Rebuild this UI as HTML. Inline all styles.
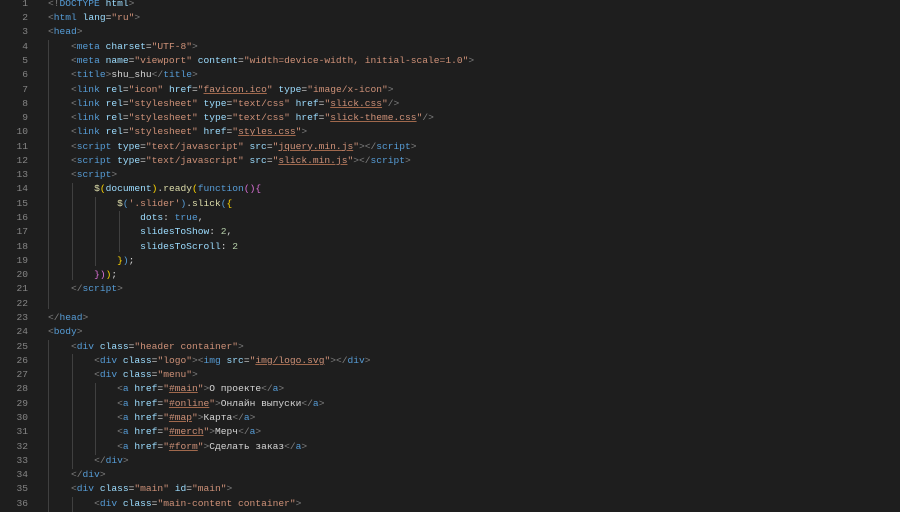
<!DOCTYPE html>
<html><head><meta charset="utf-8">
<style>
html,body{margin:0;padding:0;background:#1e1e1e;width:900px;height:512px;overflow:hidden}
#w{position:absolute;top:-3.2px;left:0;width:900px;font-family:"Liberation Mono","Noto Sans CJK SC",monospace;font-size:9.6px;line-height:14.29px;color:#d4d4d4}
.l{height:14.29px;position:relative;white-space:nowrap}
.n{position:absolute;left:0;width:28px;text-align:right;color:#858585}
.c{position:absolute;left:48px;white-space:pre}
.b{color:#808080}.t{color:#569cd6}.a{color:#9cdcfe}.s{color:#ce9178}.f{color:#dcdcaa}.y{color:#ffd700}.p{color:#da70d6}.k{color:#569cd6}.m{color:#b5cea8}
.u{text-decoration:underline;text-decoration-color:#a0684c}
.g{position:absolute;width:1px;background:#404040}
</style></head><body>
<div id="w">
<div class="l"><span class="n">1</span><span class="c"><span class="b">&lt;!</span><span class="t">DOCTYPE</span> <span class="a">html</span><span class="b">&gt;</span></span></div>
<div class="l"><span class="n">2</span><span class="c"><span class="b">&lt;</span><span class="t">html</span> <span class="a">lang</span>=<span class="s">"ru"</span><span class="b">&gt;</span></span></div>
<div class="l"><span class="n">3</span><span class="c"><span class="b">&lt;</span><span class="t">head</span><span class="b">&gt;</span></span></div>
<div class="l"><span class="n">4</span><span class="c">    <span class="b">&lt;</span><span class="t">meta</span> <span class="a">charset</span>=<span class="s">"UTF-8"</span><span class="b">&gt;</span></span></div>
<div class="l"><span class="n">5</span><span class="c">    <span class="b">&lt;</span><span class="t">meta</span> <span class="a">name</span>=<span class="s">"viewport"</span> <span class="a">content</span>=<span class="s">"width=device-width, initial-scale=1.0"</span><span class="b">&gt;</span></span></div>
<div class="l"><span class="n">6</span><span class="c">    <span class="b">&lt;</span><span class="t">title</span><span class="b">&gt;</span>shu_shu<span class="b">&lt;/</span><span class="t">title</span><span class="b">&gt;</span></span></div>
<div class="l"><span class="n">7</span><span class="c">    <span class="b">&lt;</span><span class="t">link</span> <span class="a">rel</span>=<span class="s">"icon"</span> <span class="a">href</span>=<span class="s">"<span class="u">favicon.ico</span>"</span> <span class="a">type</span>=<span class="s">"image/x-icon"</span><span class="b">&gt;</span></span></div>
<div class="l"><span class="n">8</span><span class="c">    <span class="b">&lt;</span><span class="t">link</span> <span class="a">rel</span>=<span class="s">"stylesheet"</span> <span class="a">type</span>=<span class="s">"text/css"</span> <span class="a">href</span>=<span class="s">"<span class="u">slick.css</span>"</span><span class="b">/&gt;</span></span></div>
<div class="l"><span class="n">9</span><span class="c">    <span class="b">&lt;</span><span class="t">link</span> <span class="a">rel</span>=<span class="s">"stylesheet"</span> <span class="a">type</span>=<span class="s">"text/css"</span> <span class="a">href</span>=<span class="s">"<span class="u">slick-theme.css</span>"</span><span class="b">/&gt;</span></span></div>
<div class="l"><span class="n">10</span><span class="c">    <span class="b">&lt;</span><span class="t">link</span> <span class="a">rel</span>=<span class="s">"stylesheet"</span> <span class="a">href</span>=<span class="s">"<span class="u">styles.css</span>"</span><span class="b">&gt;</span></span></div>
<div class="l"><span class="n">11</span><span class="c">    <span class="b">&lt;</span><span class="t">script</span> <span class="a">type</span>=<span class="s">"text/javascript"</span> <span class="a">src</span>=<span class="s">"<span class="u">jquery.min.js</span>"</span><span class="b">&gt;&lt;/</span><span class="t">script</span><span class="b">&gt;</span></span></div>
<div class="l"><span class="n">12</span><span class="c">    <span class="b">&lt;</span><span class="t">script</span> <span class="a">type</span>=<span class="s">"text/javascript"</span> <span class="a">src</span>=<span class="s">"<span class="u">slick.min.js</span>"</span><span class="b">&gt;&lt;/</span><span class="t">script</span><span class="b">&gt;</span></span></div>
<div class="l"><span class="n">13</span><span class="c">    <span class="b">&lt;</span><span class="t">script</span><span class="b">&gt;</span></span></div>
<div class="l"><span class="n">14</span><span class="c">        <span class="f">$</span><span class="y">(</span><span class="a">document</span><span class="y">)</span>.<span class="f">ready</span><span class="y">(</span><span class="k">function</span><span class="p">(){</span></span></div>
<div class="l"><span class="n">15</span><span class="c">            <span class="f">$</span><span class="k">(</span><span class="s">'.slider'</span><span class="k">)</span>.<span class="f">slick</span><span class="k">(</span><span class="y">{</span></span></div>
<div class="l"><span class="n">16</span><span class="c">                <span class="a">dots</span>: <span class="k">true</span>,</span></div>
<div class="l"><span class="n">17</span><span class="c">                <span class="a">slidesToShow</span>: <span class="m">2</span>,</span></div>
<div class="l"><span class="n">18</span><span class="c">                <span class="a">slidesToScroll</span>: <span class="m">2</span></span></div>
<div class="l"><span class="n">19</span><span class="c">            <span class="y">}</span><span class="k">)</span>;</span></div>
<div class="l"><span class="n">20</span><span class="c">        <span class="p">})</span><span class="y">)</span>;</span></div>
<div class="l"><span class="n">21</span><span class="c">    <span class="b">&lt;/</span><span class="t">script</span><span class="b">&gt;</span></span></div>
<div class="l"><span class="n">22</span><span class="c"></span></div>
<div class="l"><span class="n">23</span><span class="c"><span class="b">&lt;/</span><span class="t">head</span><span class="b">&gt;</span></span></div>
<div class="l"><span class="n">24</span><span class="c"><span class="b">&lt;</span><span class="t">body</span><span class="b">&gt;</span></span></div>
<div class="l"><span class="n">25</span><span class="c">    <span class="b">&lt;</span><span class="t">div</span> <span class="a">class</span>=<span class="s">"header container"</span><span class="b">&gt;</span></span></div>
<div class="l"><span class="n">26</span><span class="c">        <span class="b">&lt;</span><span class="t">div</span> <span class="a">class</span>=<span class="s">"logo"</span><span class="b">&gt;&lt;</span><span class="t">img</span> <span class="a">src</span>=<span class="s">"<span class="u">img/logo.svg</span>"</span><span class="b">&gt;&lt;/</span><span class="t">div</span><span class="b">&gt;</span></span></div>
<div class="l"><span class="n">27</span><span class="c">        <span class="b">&lt;</span><span class="t">div</span> <span class="a">class</span>=<span class="s">"menu"</span><span class="b">&gt;</span></span></div>
<div class="l"><span class="n">28</span><span class="c">            <span class="b">&lt;</span><span class="t">a</span> <span class="a">href</span>=<span class="s">"<span class="u">#main</span>"</span><span class="b">&gt;</span>О проекте<span class="b">&lt;/</span><span class="t">a</span><span class="b">&gt;</span></span></div>
<div class="l"><span class="n">29</span><span class="c">            <span class="b">&lt;</span><span class="t">a</span> <span class="a">href</span>=<span class="s">"<span class="u">#online</span>"</span><span class="b">&gt;</span>Онлайн выпуски<span class="b">&lt;/</span><span class="t">a</span><span class="b">&gt;</span></span></div>
<div class="l"><span class="n">30</span><span class="c">            <span class="b">&lt;</span><span class="t">a</span> <span class="a">href</span>=<span class="s">"<span class="u">#map</span>"</span><span class="b">&gt;</span>Карта<span class="b">&lt;/</span><span class="t">a</span><span class="b">&gt;</span></span></div>
<div class="l"><span class="n">31</span><span class="c">            <span class="b">&lt;</span><span class="t">a</span> <span class="a">href</span>=<span class="s">"<span class="u">#merch</span>"</span><span class="b">&gt;</span>Мерч<span class="b">&lt;/</span><span class="t">a</span><span class="b">&gt;</span></span></div>
<div class="l"><span class="n">32</span><span class="c">            <span class="b">&lt;</span><span class="t">a</span> <span class="a">href</span>=<span class="s">"<span class="u">#form</span>"</span><span class="b">&gt;</span>Сделать заказ<span class="b">&lt;/</span><span class="t">a</span><span class="b">&gt;</span></span></div>
<div class="l"><span class="n">33</span><span class="c">        <span class="b">&lt;/</span><span class="t">div</span><span class="b">&gt;</span></span></div>
<div class="l"><span class="n">34</span><span class="c">    <span class="b">&lt;/</span><span class="t">div</span><span class="b">&gt;</span></span></div>
<div class="l"><span class="n">35</span><span class="c">    <span class="b">&lt;</span><span class="t">div</span> <span class="a">class</span>=<span class="s">"main"</span> <span class="a">id</span>=<span class="s">"main"</span><span class="b">&gt;</span></span></div>
<div class="l"><span class="n">36</span><span class="c">        <span class="b">&lt;</span><span class="t">div</span> <span class="a">class</span>=<span class="s">"main-content container"</span><span class="b">&gt;</span></span></div>
</div>
<div class="g" style="left:48px;top:40px;height:269px"></div>
<div class="g" style="left:72px;top:183px;height:97px"></div>
<div class="g" style="left:95px;top:197px;height:69px"></div>
<div class="g" style="left:119px;top:211px;height:41px"></div>
<div class="g" style="left:48px;top:340px;height:172px"></div>
<div class="g" style="left:72px;top:354px;height:115px"></div>
<div class="g" style="left:95px;top:383px;height:72px"></div>
<div class="g" style="left:72px;top:497px;height:15px"></div>
</body></html>
